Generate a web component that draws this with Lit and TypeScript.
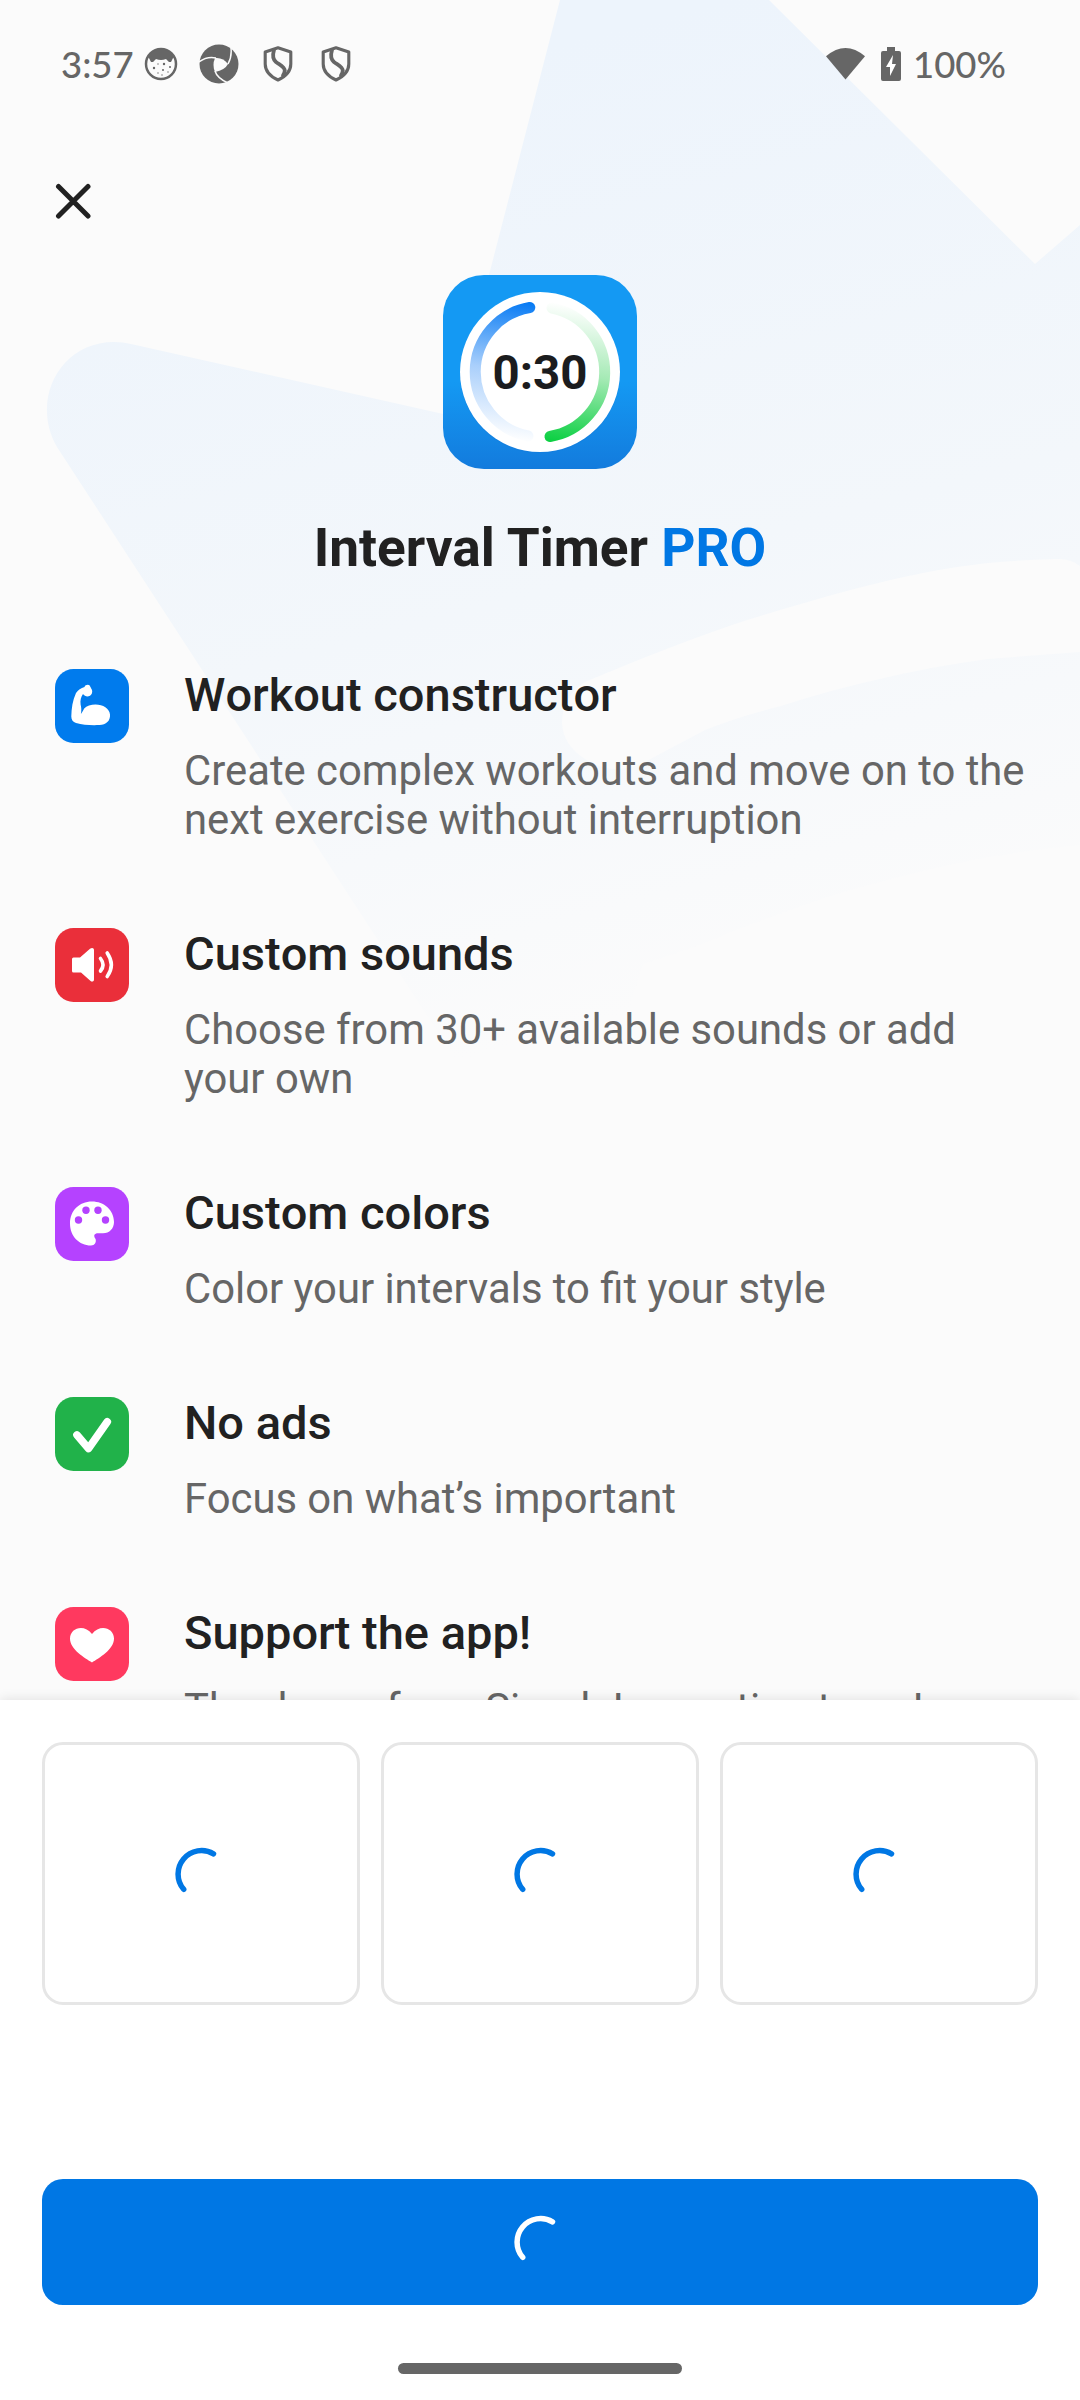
import { LitElement, html, svg, css } from "lit";
import { customElement } from "lit/decorators.js";

const shield = () => html`<svg class="shield" width="30" height="36" viewBox="0 0 30 36" fill="none" stroke="#666" stroke-width="3.1" stroke-linejoin="round" stroke-linecap="round">
  <path d="M15 1.800 2.200 6V18C2.200 26 8.500 31 15 34C21.500 31 27.800 26 27.800 18V6Z"/>
  <path d="M11 4C9.500 9 9.500 13 13 16C17 19 21.500 20.500 21.800 24.500Q21.800 26.500 20 29.500" stroke-width="3.800"/>
</svg>`;

const spinner = (color: string) => html`<svg width="54" height="54" viewBox="0 0 54 54" fill="none" stroke=${color} stroke-width="5.500" stroke-linecap="round">
  <path d="M39.500 6.800A23.500 23.500 0 0 0 9.700 42.300"/>
</svg>`;

const glyphs = {
  arm: svg`<path fill="#fff" d="M29.500 18C30 16.200 33 15.100 34.700 16.500L37 21C37.700 23.500 36.800 26 34.500 27C32 28 29.500 27 28 25C26 27.500 25 31.500 25.600 35.500C26.400 38.500 26.600 41.500 25.900 45C27.500 43 28 41.500 29.200 39.500C31.500 37 36 35.500 40.500 35.500C48 35.500 54.500 39.500 55 45.500C55.500 52 51 55.800 44.500 56.100C36 56.500 28 56 21 54C18 53 16.300 51 16.300 47.500C16.500 39.500 17.500 31.500 21 24C23 21 26 19 29.500 18Z"/>`,
  sound: svg`<path fill="#fff" d="M18.500 29.500H25L35 20.800C37 19.200 39 20 39 22V51.500C39 53.500 37 54.400 35.300 52.800L26 44.500H18.500Q17 44.500 17 43V31Q17 29.500 18.500 29.500Z"/><path d="M45.500 30.500Q50.500 36.800 45.500 43M52.200 25Q60.500 37 52.200 48.500" fill="none" stroke="#fff" stroke-width="3.600" stroke-linecap="round"/>`,
  palette: svg`<path fill="#fff" d="M37 14.500C24 14.500 15 24 15 36.500C15 49 24 58.500 36 58.500C39.800 58.500 41.500 55.500 40.600 52C38 48.500 39.500 46.300 43 46.300H48C54.500 46.300 59 41.500 59 35C59 23 49 14.500 37 14.500Z"/><g fill="#b542ff"><circle cx="23.500" cy="33" r="3.700"/><circle cx="31" cy="23.200" r="3.700"/><circle cx="43" cy="23.200" r="3.700"/><circle cx="50.500" cy="33" r="3.700"/></g>`,
  check: svg`<path fill="none" stroke="#fff" stroke-width="7.600" stroke-linecap="round" stroke-linejoin="round" d="M22 38 33.500 51.500 52.300 24.800"/>`,
  heart: svg`<path fill="#fff" d="M37 55.500C30 51 15 42.500 15 31.500C15 21 29 16.500 37 27C45 16.500 59 21 59 31.500C59 42.500 44 51 37 55.500Z"/>`,
};

const features = [
  { icon: glyphs.arm, color: "#007bed", title: "Workout constructor", text: "Create complex workouts and move on to the next exercise without interruption" },
  { icon: glyphs.sound, color: "#ea2f3a", title: "Custom sounds", text: "Choose from 30+ available sounds or add your own" },
  { icon: glyphs.palette, color: "#b542ff", title: "Custom colors", text: "Color your intervals to fit your style" },
  { icon: glyphs.check, color: "#21b24a", title: "No ads", text: "Focus on what’s important" },
  { icon: glyphs.heart, color: "#ff395f", title: "Support the app!", text: "Thank you from SimpleInnovation team!" },
];

@customElement("app-root")
export class AppRoot extends LitElement {
  static styles = css`
    :host { display: block; font-family: Roboto, "Liberation Sans", sans-serif; color: #212121; }
    * { box-sizing: border-box; }
    svg { display: block; flex: none; }
    .screen { position: relative; width: 1080px; height: 2400px; overflow: hidden; background: #fbfbfb; display: flex; flex-direction: column; }
    .backdrop { position: absolute; left: 0; top: 0; }
    .status { position: relative; height: 128px; padding: 0 76px 0 61px; display: flex; align-items: center; color: #666; }
    .clock, .percent { font: 500 36.500px/40px Lato, Roboto, sans-serif; white-space: nowrap; }
    .clock { width: 70px; }
    .cat { margin-left: 13px; }
    .swirl { margin-left: 21px; }
    .shield { margin-left: 24px; }
    .shield + .shield { margin-left: 28px; }
    .wifi { margin-left: auto; }
    .battery { margin: 0 12px 0 16px; }
    .percent { width: 91px; }
    .toolbar { position: relative; height: 147px; padding: 55px; }
    .content { position: relative; flex: 1; min-height: 0; overflow: hidden; }
    .logo { margin: 0 auto; }
    h1 { margin: 48px 0 0; text-align: center; font-weight: 700; font-size: 53.200px; line-height: 63px; }
    .pro { color: #0077e4; }
    .features { display: flex; flex-direction: column; gap: 77.800px; padding: 83px 40px 0 55px; }
    .feature { display: flex; align-items: flex-start; }
    .tile { margin: 6px 55px 0 0; }
    h2 { margin: 0 0 19px; font-weight: 500; font-size: 47px; line-height: 64px; font-kerning: none; }
    p { margin: 0; color: #666; font-size: 41.800px; line-height: 49.200px; }
    .copy { flex: 1; }
    .sheet { position: relative; height: 700px; padding: 42px 42px 0; background: #fff; box-shadow: 0 0 12px rgba(0,0,0,.12); display: flex; flex-direction: column; }
    .plans { display: grid; grid-template-columns: repeat(3, 1fr); gap: 21px; height: 263px; }
    .plan { border: 3px solid #e6e6e6; border-radius: 21px; display: flex; align-items: center; justify-content: center; }
    .buy { margin-top: 174px; height: 126px; border-radius: 21px; background: #0077e4; display: flex; align-items: center; justify-content: center; }
    .handle { margin: 58px auto 0; width: 284px; height: 11px; border-radius: 5.500px; background: #666; }
  `;

  render() {
    return html`<div class="screen">
      <svg class="backdrop" width="1080" height="1100" viewBox="0 0 1080 1100">
        <defs>
          <linearGradient id="fade" gradientUnits="userSpaceOnUse" x1="500" y1="60" x2="745" y2="985">
            <stop offset="0" stop-color="#edf4fc"/><stop offset=".55" stop-color="#f3f7fb"/><stop offset="1" stop-color="#fbfbfb"/>
          </linearGradient>
        </defs>
        <path fill="url(#fade)" d="M560 0H769L1035 264L1080 225V1100H482L57 447C30 400 60 342 114 342Q123 342 131 344L470 420C450 410 465 370 489 275Z"/>
        <path fill="#fbfbfb" d="M1080 566Q1070 558 1056 559Q1020 560 988 563C910 572 850 589 747 620Q680 642 585 682Q562 696 562 723Q563 745 585 759Q612 777 643 763L705 730Q740 716 781 706Q830 690 884 678Q930 667 988 659L1080 652Z"/>
        <path fill="#fbfbfb" d="M1080 845Q1015 851 953 864Q895 877 833 895Q780 913 729 933Q690 950 643 964L600 1100H1080Z"/>
      </svg>
      <header class="status">
        <span class="clock">3:57</span>
        <svg class="cat" width="34" height="34" viewBox="0 0 34 34"><circle cx="17" cy="17" r="15" fill="none" stroke="#666" stroke-width="2.500"/><path fill="#666" d="M4 9Q17-5 30 9L27 15 25 15 22 12Q17 14 12 12L9 15H7Z"/><g fill="#666"><circle cx="10" cy="21" r="1.200"/><circle cx="20" cy="17" r="1.200"/><circle cx="19" cy="23" r="1"/><circle cx="26" cy="20" r="1"/><circle cx="14" cy="26" r=".7"/><circle cx="24" cy="25" r=".7"/><circle cx="14" cy="17" r=".7"/><circle cx="18" cy="28" r=".7"/></g></svg>
        <svg class="swirl" width="40" height="40" viewBox="0 0 40 40"><circle cx="20" cy="20" r="19.500" fill="#666"/><path fill="#fbfbfb" d="M16 14Q24 13 29 20Q26 26 16 28Q13 21 16 14Z"/><path d="M0 18Q8 12 17 14M32 4Q33 13 29 20M16 27Q18 34 29 39" fill="none" stroke="#fbfbfb" stroke-width="1.500"/></svg>
        ${shield()}${shield()}
        <svg class="wifi" width="39" height="34" viewBox="0 0 40 34"><path fill="#666" d="M0 9Q20-8 40 9L20 33Z"/></svg>
        <svg class="battery" width="20" height="34" viewBox="0 0 20 34"><path fill="#666" d="M6 0H14V4H18Q20 4 20 6V32Q20 34 18 34H2Q0 34 0 32V6Q0 4 2 4H6Z"/><path fill="#fff" d="M12 8 5 20H9V29L15 17H11Z"/></svg>
        <span class="percent">100%</span>
      </header>
      <div class="toolbar"><svg width="37" height="37" viewBox="0 0 37 37"><path d="M3.500 3.500 33 33M33 3.500 3.500 33" stroke="#212121" stroke-width="5" stroke-linecap="round"/></svg></div>
      <main class="content">
        <svg class="logo" width="194" height="194" viewBox="0 0 194 194">
          <defs>
            <linearGradient id="tile" x2="0" y2="1"><stop offset=".55" stop-color="#1499f3"/><stop offset="1" stop-color="#137bdd"/></linearGradient>
            <linearGradient id="blue" gradientUnits="userSpaceOnUse" x1="85" y1="28" x2="65" y2="165"><stop stop-color="#087bf4"/><stop offset=".5" stop-color="#a9cffb"/><stop offset="1" stop-color="#fff"/></linearGradient>
            <linearGradient id="green" gradientUnits="userSpaceOnUse" x1="110" y1="165" x2="130" y2="30"><stop stop-color="#0ed044"/><stop offset=".5" stop-color="#a5eab5"/><stop offset="1" stop-color="#fff"/></linearGradient>
          </defs>
          <rect width="194" height="194" rx="41" fill="url(#tile)"/>
          <circle cx="97" cy="98" r="80" fill="#137bdd" opacity=".5"/>
          <circle cx="97" cy="97" r="80" fill="#fff"/>
          <g fill="none" stroke-width="11" stroke-linecap="round"><path stroke="url(#blue)" d="M86.800 32.500A65.300 65.300 0 0 0 85 161"/><path stroke="url(#green)" d="M107 161.500A65.300 65.300 0 0 0 109 33"/></g>
          <text x="97" y="114" text-anchor="middle" font-family="Roboto, sans-serif" font-size="48.500" font-weight="700" fill="#1b1c1e" textLength="95" lengthAdjust="spacingAndGlyphs">0:30</text>
        </svg>
        <h1>Interval Timer <span class="pro">PRO</span></h1>
        <div class="features">${features.map((f) => html`<section class="feature">
          <svg class="tile" width="74" height="74" viewBox="0 0 74 74"><rect width="74" height="74" rx="18.500" fill=${f.color}/>${f.icon}</svg>
          <div class="copy"><h2>${f.title}</h2><p>${f.text}</p></div>
        </section>`)}</div>
      </main>
      <footer class="sheet">
        <div class="plans">${[0, 1, 2].map(() => html`<div class="plan">${spinner("#0077e4")}</div>`)}</div>
        <div class="buy">${spinner("#fff")}</div>
        <div class="handle"></div>
      </footer>
    </div>`;
  }
}
